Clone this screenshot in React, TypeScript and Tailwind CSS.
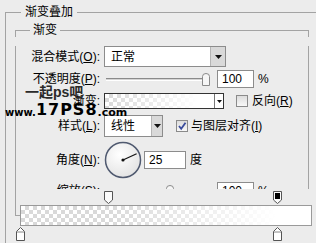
import React from 'react';

const line = 'border-[#a3a3a3]';

// 下拉按钮
const DropBtn = ({ w = 15 }: { w?: number }) => (
  <div
    className={`flex h-full items-center justify-center border-l border-[#b5b5b5] bg-[#d9d9d9] ${w === 15 ? 'w-[15px]' : 'w-[11px]'}`}
  >
    <svg width="7" height="4" viewBox="0 0 7 4">
      <path d="M0 0 H7 L3.5 4 Z" fill="#111" />
    </svg>
  </div>
);

// 滑块
const Thumb = () => (
  <svg width="8" height="13" viewBox="0 0 8 13" className="block">
    <path d="M0.5 12.5 V3.5 Q0.5 0.5 4 0.5 Q7.5 0.5 7.5 3.5 V12.5 Z" fill="#f6f6f6" stroke="#8a8a8a" />
  </svg>
);

const Label = ({ children }: { children: React.ReactNode }) => (
  <div className="w-[84px] shrink-0 text-right">{children}</div>
);

const U = ({ children }: { children: React.ReactNode }) => <span className="underline">{children}</span>;

const Checker = 'bg-[image:repeating-conic-gradient(#d9d9d9_0%_25%,#ffffff_0%_50%)] bg-[length:8px_8px]';

const TopStop = ({ dark }: { dark?: boolean }) => (
  <svg width="9" height="13" viewBox="0 0 9 13" className="block">
    <path d="M0.5 0.5 H8.5 V9 L4.5 12.5 L0.5 9 Z" fill="#fbfbfb" stroke="#555" />
    {dark && <rect x="2" y="2" width="5" height="6" fill="#000" />}
  </svg>
);

const BottomStop = () => (
  <svg width="9" height="14" viewBox="0 0 9 14" className="block">
    <path d="M4.5 0.5 L8.5 4.5 V13.5 H0.5 V4.5 Z" fill="#fff" stroke="#555" />
    <line x1="1" y1="5" x2="8" y2="5" stroke="#888" />
  </svg>
);

export default function App() {
  return (
    <div className="relative h-[243px] w-[316px] overflow-hidden bg-[#ececec] font-['Liberation_Sans','Noto_Sans_CJK_SC',sans-serif] text-[12px] leading-[14px] text-black">
      <div className="pl-[5px] pt-[5px]">
        {/* 渐变叠加 */}
        <div className="flex h-[14px] items-center">
          <div className={`h-[7px] w-[16px] self-end border-l border-t ${line}`} />
          <span className="px-[4px]">渐变叠加</span>
          <div className="h-px flex-1 bg-[#a3a3a3]" />
        </div>
        <div className={`h-[230px] border-l pl-[9px] pt-[4px] ${line}`}>
          <div className="w-[294px]">
            <div className="flex h-[14px] items-center">
              <div className={`h-[7px] w-[15px] self-end border-l border-t ${line}`} />
              <span className="px-[3px]">渐变</span>
              <div className={`h-[7px] flex-1 self-end border-r border-t ${line}`} />
            </div>
            <div className={`h-[170px] border-b border-l border-r ${line}`}>
              {/* 混合模式 */}
              <div className="mt-[9px] flex h-[21px] items-center">
                <Label>混合模式(<U>O</U>):</Label>
                <div className="ml-[4px] flex h-[21px] w-[122px] items-center border border-[#8c8c8c] bg-white">
                  <span className="flex-1 pl-[6px]">正常</span>
                  <DropBtn />
                </div>
              </div>

              {/* 不透明度 */}
              <div className="mt-[3px] flex h-[18px] items-center">
                <Label>不透明度(<U>P</U>):</Label>
                <div className="ml-[6px] h-[3px] w-[96px] border-b border-t border-b-white border-t-[#8a8a8a] bg-[#d4d4d4]" />
                <Thumb />
                <div className="ml-[7px] flex h-[18px] w-[37px] items-center border border-[#8c8c8c] bg-white pl-[4px]">100</div>
                <span className="ml-[4px]">%</span>
              </div>

              {/* 渐变 */}
              <div className="mt-[5px] flex h-[16px] items-center">
                <Label>渐变:</Label>
                <div className="ml-[4px] flex h-[16px] w-[120px] border border-[#333]">
                  <div className={`relative flex-1 ${Checker}`}>
                    <div className="absolute inset-0 bg-[linear-gradient(to_right,rgba(255,255,255,0)_0%,#fff_85%)]" />
                  </div>
                  <div className="flex w-[9px] items-center justify-center border-l border-[#777] bg-white">
                    <svg width="5" height="3" viewBox="0 0 5 3">
                      <path d="M0 0 H5 L2.5 3 Z" fill="#111" />
                    </svg>
                  </div>
                </div>
                <div className="ml-[12px] h-[12px] w-[12px] border border-[#8a8a8a] bg-[linear-gradient(#dcdcdc,#f8f8f8)]" />
                <span className="ml-[4px]">反向(<U>R</U>)</span>
              </div>

              {/* 样式 */}
              <div className="mt-[6px] flex h-[22px] items-center">
                <Label>样式(<U>L</U>):</Label>
                <div className="ml-[4px] flex h-[22px] w-[59px] items-center border border-[#8c8c8c] bg-white">
                  <span className="flex-1 pl-[6px]">线性</span>
                  <DropBtn w={11} />
                </div>
                <div className="ml-[13px] flex h-[12px] w-[12px] items-center justify-center border border-[#8a8a8a] bg-[linear-gradient(#dcdcdc,#f8f8f8)]">
                  <svg width="10" height="10" viewBox="0 0 10 10">
                    <path d="M2 5 L4.2 7.8 L8.5 1.8" fill="none" stroke="#3a4c9c" strokeWidth="1.8" />
                  </svg>
                </div>
                <span className="ml-[3px]">与图层对齐(<U>I</U>)</span>
              </div>

              {/* 角度 */}
              <div className="mt-[4px] flex h-[38px] items-center">
                <Label>角度(<U>N</U>):</Label>
                <svg width="38" height="38" viewBox="0 0 38 38" className="ml-[4px] block">
                  <defs>
                    <radialGradient id="dial" cx="0.4" cy="0.35" r="0.7">
                      <stop offset="0" stopColor="#ffffff" />
                      <stop offset="1" stopColor="#e2e2e2" />
                    </radialGradient>
                  </defs>
                  <circle cx="19" cy="19" r="17.5" fill="url(#dial)" stroke="#505a70" strokeWidth="1.5" />
                  <line x1="19" y1="19" x2="32.6" y2="12.7" stroke="#111" strokeWidth="1.2" />
                  <circle cx="19" cy="19" r="1.6" fill="#111" />
                </svg>
                <div className="ml-[2px] flex h-[18px] w-[42px] items-center border border-[#8c8c8c] bg-white pl-[4px]">25</div>
                <span className="ml-[4px]">度</span>
              </div>

              {/* 缩放 */}
              <div className="mt-[3px] flex h-[18px] items-center">
                <Label>缩放(<U>S</U>):</Label>
                <div className="ml-[6px] h-[3px] w-[60px] border-b border-t border-b-white border-t-[#8a8a8a] bg-[#d4d4d4]" />
                <Thumb />
                <div className="h-[3px] w-[36px] border-b border-t border-b-white border-t-[#8a8a8a] bg-[#d4d4d4]" />
                <div className="ml-[7px] flex h-[18px] w-[37px] items-center border border-[#8c8c8c] bg-white pl-[4px]">100</div>
                <span className="ml-[4px]">%</span>
              </div>
            </div>
          </div>
        </div>
      </div>

      {/* 渐变编辑条 */}
      <div className="absolute bottom-0 left-[20px] right-0 top-[189px] bg-[#ececec]">
        <div className="relative h-[16px]">
          <div className="absolute left-[84px] top-[2px]"><TopStop /></div>
          <div className="absolute left-[253px] top-[2px]"><TopStop dark /></div>
        </div>
        <div className={`relative h-[21px] w-[292px] border border-[#9a9a9a] ${Checker}`}>
          <div className="absolute inset-0 bg-[linear-gradient(to_right,rgba(255,255,255,0)_30%,#fff_88%)]" />
        </div>
        <div className="relative h-[17px]">
          <div className="absolute left-[-4px] top-[1px]"><BottomStop /></div>
          <div className="absolute left-[253px] top-[1px]"><BottomStop /></div>
        </div>
      </div>

      {/* 水印 */}
      <div className="absolute left-[25px] top-[84px] text-[14px] font-bold leading-[16px] text-[#2a2a2a]">一起ps吧</div>
      <div className="absolute left-[5px] top-[102px] flex items-end font-['DejaVu_Sans',sans-serif] font-bold leading-none text-black">
        <span className="text-[10px]">www.</span>
        <span className="text-[16px] tracking-[1px]">17PS8</span>
        <span className="text-[11px]">.com</span>
      </div>
    </div>
  );
}
